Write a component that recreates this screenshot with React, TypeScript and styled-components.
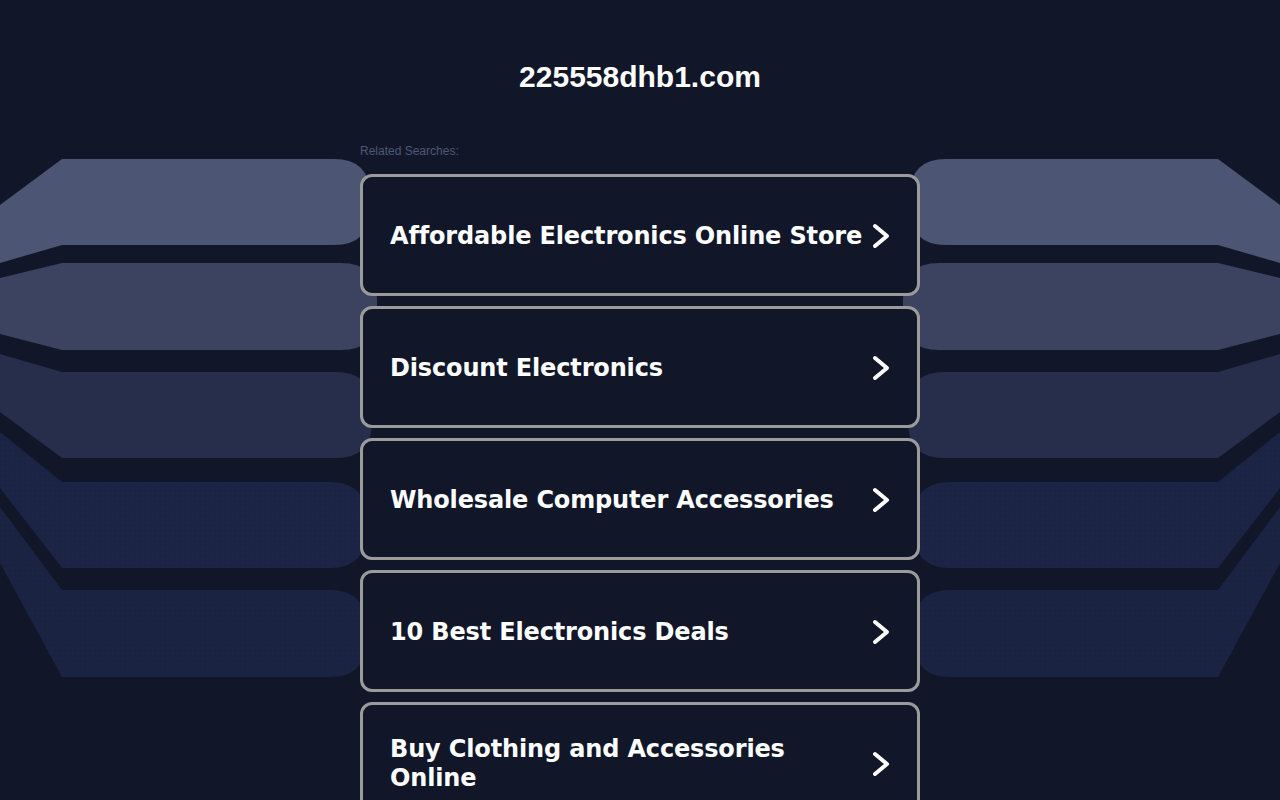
import React from "react";
import styled, { createGlobalStyle } from "styled-components";

const GlobalStyle = createGlobalStyle`
  html, body {
    margin: 0;
    padding: 0;
    background: #111729;
  }
  body {
    font-family: "Liberation Sans", Arial, sans-serif;
  }
  * { box-sizing: border-box; }
`;

const Page = styled.div`
  position: relative;
  min-height: 100vh;
  overflow: hidden;
  background: #111729;
`;

const Backdrop = styled.svg`
  position: absolute;
  top: 0;
  left: 0;
  width: 1280px;
  height: 800px;
  z-index: 0;
  pointer-events: none;
`;

const Content = styled.main`
  position: relative;
  z-index: 1;
  width: 560px;
  margin: 0 auto;
  display: flex;
  flex-direction: column;
`;

const Title = styled.h1`
  margin: 59px 0 0;
  font-family: "Liberation Sans", Arial, sans-serif;
  font-size: 30px;
  line-height: 36px;
  font-weight: 700;
  color: #ffffff;
  text-align: center;
`;

const Label = styled.div`
  margin-top: 49px;
  font-family: "Liberation Sans", Arial, sans-serif;
  font-size: 12px;
  line-height: 14px;
  color: #4f5878;
`;

const List = styled.div`
  margin-top: 16px;
  display: flex;
  flex-direction: column;
  gap: 10px;
`;

const Card = styled.a`
  display: flex;
  align-items: center;
  justify-content: space-between;
  gap: 8px;
  height: 122px;
  padding: 2px 27px 0;
  border: 3px solid #9b9b9b;
  border-radius: 12px;
  background: #111729;
  color: #ffffff;
  text-decoration: none;
  cursor: pointer;
`;

const CardText = styled.span`
  font-family: "DejaVu Sans", Verdana, sans-serif;
  font-weight: 700;
  font-size: 24px;
  line-height: 29px;
  letter-spacing: -0.15px;
  color: #ffffff;
`;

const Chevron = styled.svg`
  flex: 0 0 auto;
  width: 18px;
  height: 26px;
`;

type Band = { tl: number; t: number; b: number; bl: number; r: number; fill: string; dots?: boolean };

const bands: Band[] = [
  { tl: 205, t: 159, b: 245, bl: 263, r: 370, fill: "#4c5573" },
  { tl: 278, t: 263, b: 350, bl: 334, r: 377, fill: "#3b4361" },
  { tl: 354, t: 372, b: 458, bl: 412, r: 372, fill: "#262e4c" },
  { tl: 432, t: 482, b: 568, bl: 488, r: 366, fill: "#1c2445", dots: true },
  { tl: 507, t: 590, b: 677, bl: 563, r: 366, fill: "#1b2343", dots: true },
];

const R = 36;

const leftPath = (d: Band) =>
  `M0,${d.tl} L62,${d.t} L${d.r - R},${d.t} Q${d.r},${d.t} ${d.r},${d.t + R} L${d.r},${d.b - R} Q${d.r},${d.b} ${d.r - R},${d.b} L62,${d.b} L0,${d.bl} Z`;

const rightPath = (d: Band) => {
  const m = (x: number) => 1280 - x;
  return `M1280,${d.tl} L${m(62)},${d.t} L${m(d.r - R)},${d.t} Q${m(d.r)},${d.t} ${m(d.r)},${d.t + R} L${m(d.r)},${d.b - R} Q${m(d.r)},${d.b} ${m(d.r - R)},${d.b} L${m(62)},${d.b} L1280,${d.bl} Z`;
};

const items = [
  "Affordable Electronics Online Store",
  "Discount Electronics",
  "Wholesale Computer Accessories",
  "10 Best Electronics Deals",
  "Buy Clothing and Accessories Online",
];

export default function App() {
  return (
    <Page>
      <GlobalStyle />
      <Backdrop viewBox="0 0 1280 800" aria-hidden="true">
        <defs>
          <pattern id="dots" width="5" height="5" patternUnits="userSpaceOnUse">
            <rect x="0" y="0" width="1" height="1" fill="#141b36" opacity="0.35" />
            <rect x="2" y="3" width="1" height="1" fill="#273159" opacity="0.25" />
          </pattern>
        </defs>
        {bands.map((d, i) => (
          <g key={i}>
            <path d={leftPath(d)} fill={d.fill} />
            <path d={rightPath(d)} fill={d.fill} />
            {d.dots && (
              <>
                <path d={leftPath(d)} fill="url(#dots)" />
                <path d={rightPath(d)} fill="url(#dots)" />
              </>
            )}
          </g>
        ))}
      </Backdrop>
      <Content>
        <Title>225558dhb1.com</Title>
        <Label>Related Searches:</Label>
        <List>
          {items.map((t) => (
            <Card key={t}>
              <CardText>{t}</CardText>
              <Chevron viewBox="0 0 18 26">
                <polyline
                  points="3,3 15,13 3,23"
                  fill="none"
                  stroke="#ffffff"
                  strokeWidth="4"
                  strokeLinecap="round"
                  strokeLinejoin="round"
                />
              </Chevron>
            </Card>
          ))}
        </List>
      </Content>
    </Page>
  );
}
